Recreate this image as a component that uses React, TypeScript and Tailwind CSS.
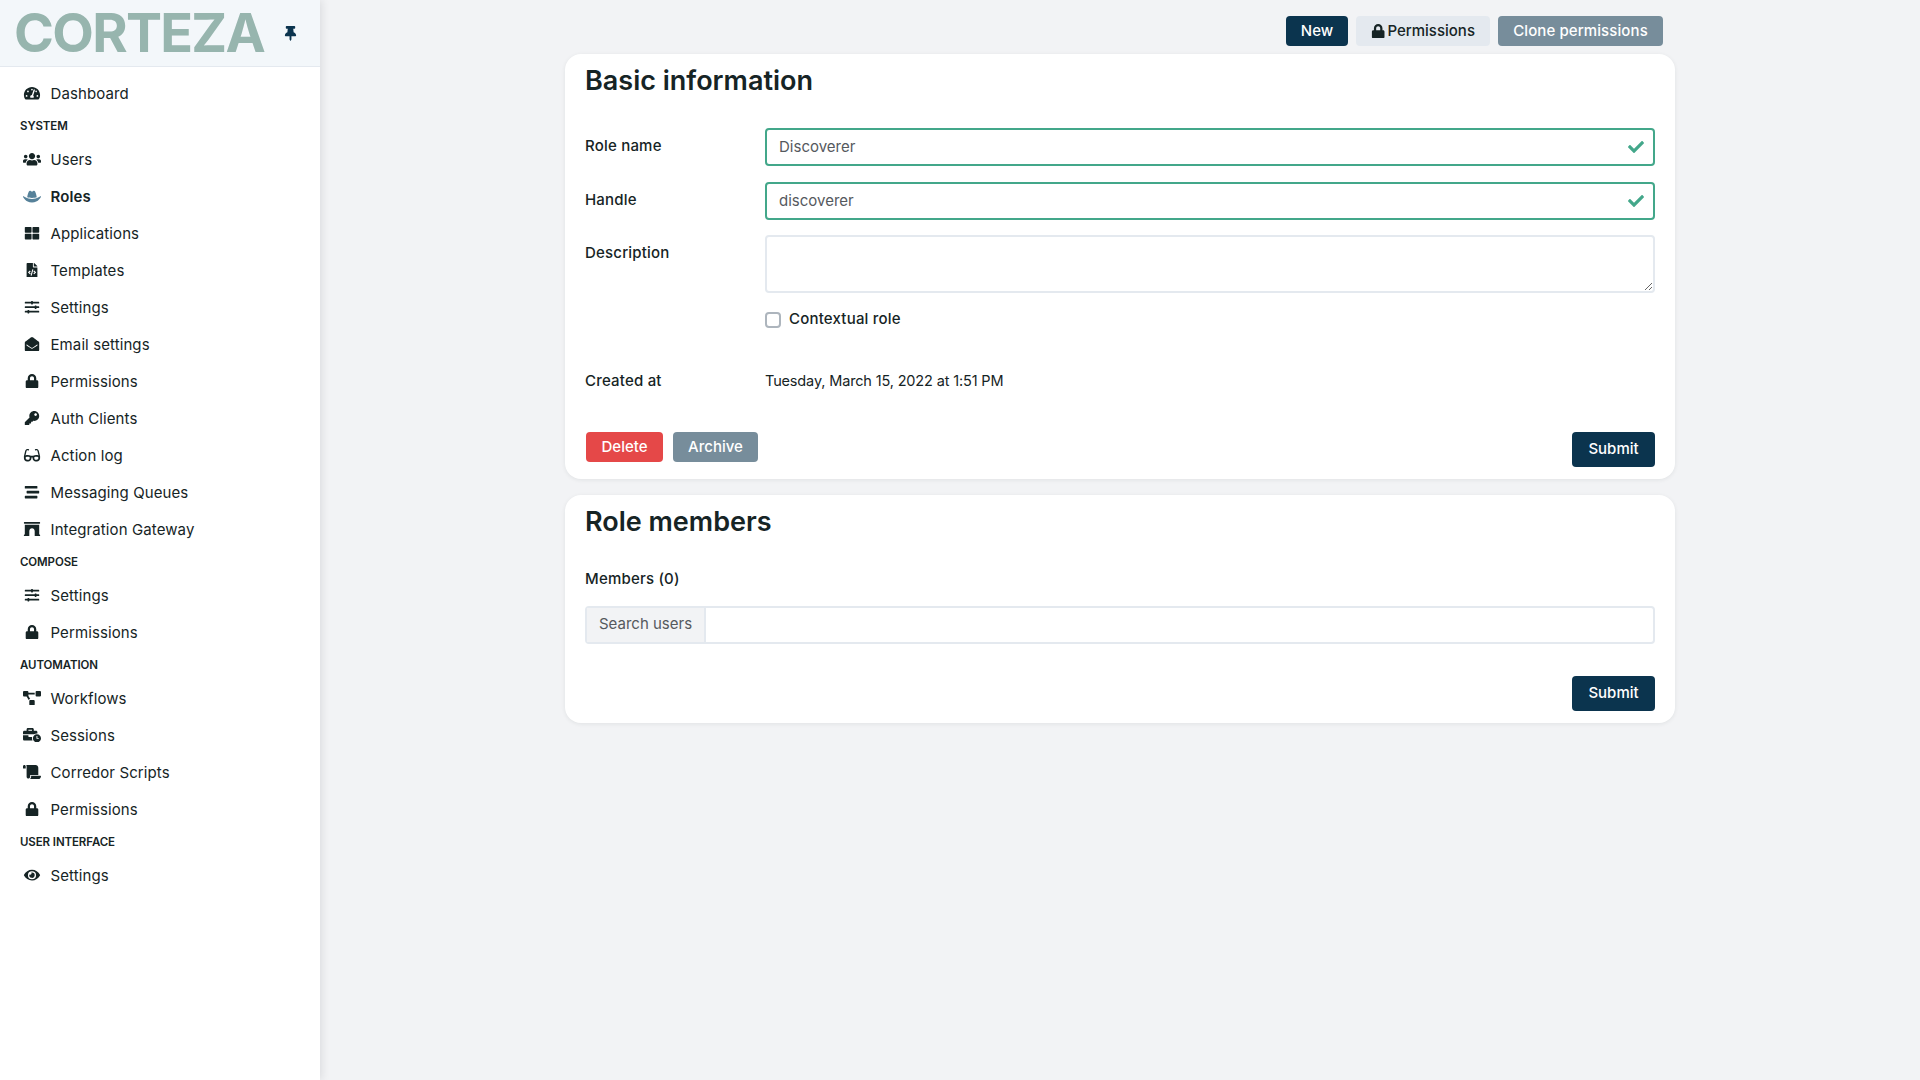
import type { ReactNode } from 'react'
import type { IconType } from 'react-icons'
import {
  FaArchway,
  FaBusinessTime,
  FaCheck,
  FaEnvelopeOpen,
  FaEye,
  FaFileCode,
  FaGlasses,
  FaHatCowboy,
  FaKey,
  FaLock,
  FaProjectDiagram,
  FaScroll,
  FaSlidersH,
  FaStream,
  FaTachometerAlt,
  FaThLarge,
  FaThumbtack,
  FaUsers,
} from 'react-icons/fa'

type NavItem = { label: string; icon: IconType; active?: boolean }
type NavGroup = { title?: string; items: NavItem[] }

const nav: NavGroup[] = [
  { items: [{ label: 'Dashboard', icon: FaTachometerAlt }] },
  {
    title: 'System',
    items: [
      { label: 'Users', icon: FaUsers },
      { label: 'Roles', icon: FaHatCowboy, active: true },
      { label: 'Applications', icon: FaThLarge },
      { label: 'Templates', icon: FaFileCode },
      { label: 'Settings', icon: FaSlidersH },
      { label: 'Email settings', icon: FaEnvelopeOpen },
      { label: 'Permissions', icon: FaLock },
      { label: 'Auth Clients', icon: FaKey },
      { label: 'Action log', icon: FaGlasses },
      { label: 'Messaging Queues', icon: FaStream },
      { label: 'Integration Gateway', icon: FaArchway },
    ],
  },
  {
    title: 'Compose',
    items: [
      { label: 'Settings', icon: FaSlidersH },
      { label: 'Permissions', icon: FaLock },
    ],
  },
  {
    title: 'Automation',
    items: [
      { label: 'Workflows', icon: FaProjectDiagram },
      { label: 'Sessions', icon: FaBusinessTime },
      { label: 'Corredor Scripts', icon: FaScroll },
      { label: 'Permissions', icon: FaLock },
    ],
  },
  {
    title: 'User interface',
    items: [{ label: 'Settings', icon: FaEye }],
  },
]

function Sidebar() {
  return (
    <aside className="w-[320px] shrink-0 bg-white shadow-[2px_0_8px_rgba(30,34,40,0.1)] z-10">
      <div className="h-[67px] bg-[#f3f7fa] border-b border-[#e4e9ef] flex items-center pl-[14px] pr-[22px] justify-between">
        <span className="text-[#97b5ae] text-[54px] leading-none font-bold tracking-[-1.7px]">CORTEZA</span>
        <FaThumbtack className="text-[#0b344e] text-[15px]" />
      </div>
      <nav className="pt-[8px]">
        {nav.map((group, i) => (
          <div key={i}>
            {group.title && (
              <div className="h-[29px] pl-[20px] flex items-center uppercase text-[11.5px] font-semibold tracking-[-0.1px] text-[#162425]">
                {group.title}
              </div>
            )}
            {group.items.map(item => (
              <div key={item.label} className="h-[37px] flex items-center text-[15px] text-[#162425]">
                <span className="w-[50px] pl-[22px] shrink-0 pb-[1px]">
                  <item.icon className={`w-[20px] h-[14.4px] ${item.active ? 'text-[#568199]' : 'text-[#162425]'}`} />
                </span>
                <span className={`pl-[0.5px] pt-[2px] tracking-[0.1px] ${item.active ? 'font-semibold' : ''}`}>{item.label}</span>
              </div>
            ))}
          </div>
        ))}
      </nav>
    </aside>
  )
}

function Btn({ className, children }: { className: string; children: ReactNode }) {
  return (
    <button className={`h-[30px] rounded-[4px] text-[15px] font-medium flex items-center justify-center ${className}`}>
      {children}
    </button>
  )
}

function SubmitBtn() {
  return (
    <button className="h-[35px] w-[83px] rounded-[4px] bg-[#0b344e] text-white text-[15px] font-medium">Submit</button>
  )
}

function ValidInput({ value }: { value: string }) {
  return (
    <div className="relative flex-1">
      <input
        readOnly
        value={value}
        className="w-full h-[38px] rounded-[4px] border-2 border-[#43a78a] px-[12px] pb-[2px] text-[15px] text-[#55595e] outline-none"
      />
      <FaCheck className="absolute right-[11px] top-[11px] text-[16px] text-[#43a78a]" />
    </div>
  )
}

function Label({ children }: { children: ReactNode }) {
  return (
    <label className="w-[180px] shrink-0 leading-[36px] text-[15px] font-medium tracking-[0.2px] text-[#162425]">
      {children}
    </label>
  )
}

function Card({ title, children }: { title: string; children: ReactNode }) {
  return (
    <section className="bg-white rounded-[16px] shadow-[0_1px_4px_rgba(30,34,40,0.08)] px-[20px] pt-[8px] pb-[12px]">
      <h2 className="text-[27px] leading-[38px] h-[36px] font-semibold text-[#162425]">{title}</h2>
      {children}
    </section>
  )
}

export default function App() {
  return (
    <div className="flex min-h-screen bg-[#f2f3f5] font-['Inter',sans-serif]">
      <Sidebar />
      <main className="flex-1 pt-[16px]">
        <div className="w-[1110px] mx-auto">
          <div className="flex justify-end gap-[8px] pr-[12px] mb-[8px]">
            <Btn className="w-[62px] bg-[#0b344e] text-white">New</Btn>
            <Btn className="w-[134px] bg-[#e4e9ef] text-[#162425] gap-[2px]">
              <FaLock className="text-[14.4px]" />
              Permissions
            </Btn>
            <Btn className="w-[165px] bg-[#778d9b] text-white tracking-[0.1px]">Clone permissions</Btn>
          </div>

          <Card title="Basic information">
            <div className="flex mt-[30px]">
              <Label>Role name</Label>
              <ValidInput value="Discoverer" />
            </div>
            <div className="flex mt-[16px]">
              <Label>Handle</Label>
              <ValidInput value="discoverer" />
            </div>
            <div className="flex mt-[15px]">
              <Label>Description</Label>
              <textarea className="flex-1 h-[58px] rounded-[4px] border-2 border-[#e4e9ef] outline-none" />
            </div>
            <div className="flex items-center h-[20px] mt-[17px] pl-[180px] text-[15px] font-medium tracking-[0.2px] text-[#162425]">
              <span className="w-[16px] h-[16px] rounded-[4px] border-2 border-[#adb5bd] bg-white mr-[8px]" />
              <span className="-mt-[1px]">Contextual role</span>
            </div>
            <div className="flex items-center h-[24px] mt-[39px] text-[15px] text-[#162425]">
              <span className="w-[180px] font-medium tracking-[0.2px]">Created at</span>
              <span className="text-[14.5px] tracking-[-0.15px]">Tuesday, March 15, 2022 at 1:51 PM</span>
            </div>
            <div className="flex justify-between items-start mt-[39px]">
              <div className="flex gap-[10px] pl-[1px]">
                <Btn className="w-[77px] bg-[#e54848] text-white">Delete</Btn>
                <Btn className="w-[85px] bg-[#778d9b] text-white">Archive</Btn>
              </div>
              <SubmitBtn />
            </div>
          </Card>

          <div className="mt-[16px]">
            <Card title="Role members">
              <div className="mt-[28px] h-[24px] leading-[24px] text-[15px] font-medium tracking-[0.2px] text-[#162425]">
                Members (0)
              </div>
              <div className="mt-[15px] flex h-[38px] rounded-[4px] border-2 border-[#e4e9ef]">
                <span className="w-[119px] shrink-0 bg-[#f2f3f5] border-r-2 border-[#e4e9ef] flex items-center pl-[12px] pb-[1px] text-[15px] text-[#55595e]">
                  Search users
                </span>
                <input className="flex-1 outline-none" />
              </div>
              <div className="flex justify-end mt-[32px]">
                <SubmitBtn />
              </div>
            </Card>
          </div>
        </div>
      </main>
    </div>
  )
}
